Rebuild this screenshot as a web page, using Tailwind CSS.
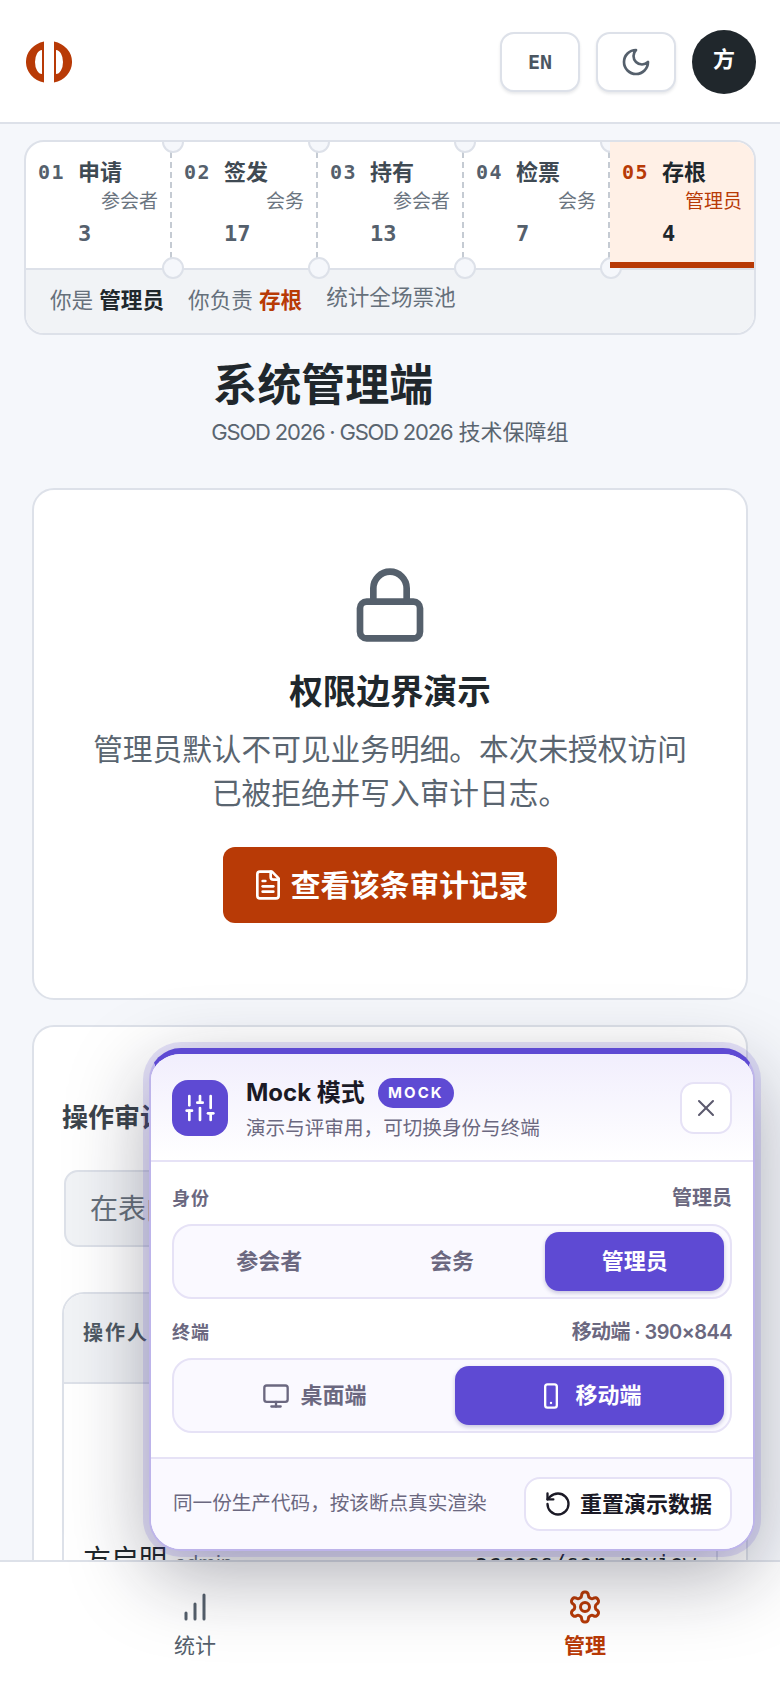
<!DOCTYPE html>
<html lang="zh-CN">

<head>
    <meta charset="UTF-8">
    <meta name="viewport" content="width=device-width, initial-scale=1.0">
    <title>系统管理端</title>
    <script src="https://cdn.jsdelivr.net/npm/@tailwindcss/browser@4"></script>
</head>

<body class="relative w-[780px] h-[1688px] overflow-hidden bg-[#f5f7fb] text-[#20272c] font-['Inter','Noto_Sans_CJK_SC',sans-serif]">
    <!-- top bar -->
    <header class="h-[124px] bg-white border-b-2 border-[#dde1e9] flex items-center justify-between pl-[26px] pr-6 pt-[1px]">
        <svg class="w-[46px] h-[42px]" viewBox="26 40 46 42" fill="#b83a06">
            <path fill-rule="evenodd" d="M44 40.5A23 21 0 0 0 44 81.5ZM42 49A7 12 0 0 0 42 73Z" />
            <path fill-rule="evenodd" d="M54 40.5A23 21 0 0 1 54 81.5ZM56 49A7 12 0 0 1 56 73Z" />
        </svg>
        <div class="flex items-center gap-4">
            <button class="w-20 h-[60px] rounded-[14px] border-2 border-[#dde1e9] bg-white shadow-[0_2px_3px_rgba(30,40,60,0.1)] font-['DejaVu_Sans_Mono',monospace] font-bold text-[20px] text-[#4b5661]">EN</button>
            <button class="w-20 h-[60px] rounded-[14px] border-2 border-[#dde1e9] bg-white shadow-[0_2px_3px_rgba(30,40,60,0.1)] flex items-center justify-center text-[#55606c]">
                <svg class="w-8 h-8" viewBox="0 0 24 24" fill="none" stroke="currentColor" stroke-width="2" stroke-linecap="round" stroke-linejoin="round"><path d="M12 3a6 6 0 0 0 9 9 9 9 0 1 1-9-9Z" /></svg>
            </button>
            <div class="w-16 h-16 rounded-full bg-[#20272c] text-white font-semibold text-[22px] flex items-center justify-center pb-1">方</div>
        </div>
    </header>

    <main class="px-6 pt-4">
        <!-- ticket stepper -->
        <section class="relative overflow-hidden rounded-[20px] border-2 border-[#dde1e9] bg-white">
            <div class="flex h-[126px]">
                <div class="relative flex-1 border-r-2 border-dashed border-[#c5cbd3] pl-[12px] pr-[12px] pt-[15px]">
                    <span class="absolute -top-[11px] -right-[14px] z-10 w-[22px] h-[22px] rounded-full border-2 border-[#dde1e9] bg-[#f5f7fb]"></span>
                    <span class="absolute -bottom-[11px] -right-[14px] z-10 w-[22px] h-[22px] rounded-full border-2 border-[#dde1e9] bg-[#f5f7fb]"></span>
                    <div class="flex h-[30px] items-center gap-[13px]"><span class="font-['DejaVu_Sans_Mono',monospace] font-bold text-[20px] tracking-[1.5px] text-[#55606c]">01</span><span class="text-[22px] font-semibold text-[#3f4a53]">申请</span></div>
                    <div class="h-[26px] mt-[2px] leading-[26px] text-right text-[19px] text-[#6b7580]">参会者</div>
                    <div class="h-[30px] mt-[4px] leading-[30px] pl-[40px] font-['DejaVu_Sans_Mono',monospace] font-bold text-[22px] text-[#55606c]">3</div>
                </div>
                <div class="relative flex-1 border-r-2 border-dashed border-[#c5cbd3] pl-[12px] pr-[12px] pt-[15px]">
                    <span class="absolute -top-[11px] -right-[14px] z-10 w-[22px] h-[22px] rounded-full border-2 border-[#dde1e9] bg-[#f5f7fb]"></span>
                    <span class="absolute -bottom-[11px] -right-[14px] z-10 w-[22px] h-[22px] rounded-full border-2 border-[#dde1e9] bg-[#f5f7fb]"></span>
                    <div class="flex h-[30px] items-center gap-[13px]"><span class="font-['DejaVu_Sans_Mono',monospace] font-bold text-[20px] tracking-[1.5px] text-[#55606c]">02</span><span class="text-[22px] font-semibold text-[#3f4a53]">签发</span></div>
                    <div class="h-[26px] mt-[2px] leading-[26px] text-right text-[19px] text-[#6b7580]">会务</div>
                    <div class="h-[30px] mt-[4px] leading-[30px] pl-[40px] font-['DejaVu_Sans_Mono',monospace] font-bold text-[22px] text-[#55606c]">17</div>
                </div>
                <div class="relative flex-1 border-r-2 border-dashed border-[#c5cbd3] pl-[12px] pr-[12px] pt-[15px]">
                    <span class="absolute -top-[11px] -right-[14px] z-10 w-[22px] h-[22px] rounded-full border-2 border-[#dde1e9] bg-[#f5f7fb]"></span>
                    <span class="absolute -bottom-[11px] -right-[14px] z-10 w-[22px] h-[22px] rounded-full border-2 border-[#dde1e9] bg-[#f5f7fb]"></span>
                    <div class="flex h-[30px] items-center gap-[13px]"><span class="font-['DejaVu_Sans_Mono',monospace] font-bold text-[20px] tracking-[1.5px] text-[#55606c]">03</span><span class="text-[22px] font-semibold text-[#3f4a53]">持有</span></div>
                    <div class="h-[26px] mt-[2px] leading-[26px] text-right text-[19px] text-[#6b7580]">参会者</div>
                    <div class="h-[30px] mt-[4px] leading-[30px] pl-[40px] font-['DejaVu_Sans_Mono',monospace] font-bold text-[22px] text-[#55606c]">13</div>
                </div>
                <div class="relative flex-1 border-r-2 border-dashed border-[#c5cbd3] pl-[12px] pr-[12px] pt-[15px]">
                    <span class="absolute -top-[11px] -right-[14px] z-10 w-[22px] h-[22px] rounded-full border-2 border-[#dde1e9] bg-[#f5f7fb]"></span>
                    <span class="absolute -bottom-[11px] -right-[14px] z-10 w-[22px] h-[22px] rounded-full border-2 border-[#dde1e9] bg-[#f5f7fb]"></span>
                    <div class="flex h-[30px] items-center gap-[13px]"><span class="font-['DejaVu_Sans_Mono',monospace] font-bold text-[20px] tracking-[1.5px] text-[#55606c]">04</span><span class="text-[22px] font-semibold text-[#3f4a53]">检票</span></div>
                    <div class="h-[26px] mt-[2px] leading-[26px] text-right text-[19px] text-[#6b7580]">会务</div>
                    <div class="h-[30px] mt-[4px] leading-[30px] pl-[40px] font-['DejaVu_Sans_Mono',monospace] font-bold text-[22px] text-[#55606c]">7</div>
                </div>
                <div class="relative z-20 flex-1 bg-[#fff0e6] border-b-[6px] border-[#b83a06] pl-[12px] pr-[12px] pt-[15px]">
                    <div class="flex h-[30px] items-center gap-[13px]"><span class="font-['DejaVu_Sans_Mono',monospace] font-bold text-[20px] tracking-[1.5px] text-[#b83a06]">05</span><span class="text-[22px] font-semibold text-[#20272c]">存根</span></div>
                    <div class="h-[26px] mt-[2px] leading-[26px] text-right text-[19px] text-[#b83a06]">管理员</div>
                    <div class="h-[30px] mt-[4px] leading-[30px] pl-[40px] font-['DejaVu_Sans_Mono',monospace] font-bold text-[22px] text-[#20272c]">4</div>
                </div>
            </div>
            <div class="h-[65px] border-t-2 border-[#dde1e9] bg-[#f1f3f6] flex items-start gap-6 pl-6 pt-[14px] text-[21.6px] text-[#66707b]">
                <span class="leading-[32px]">你是 <b class="font-semibold text-[#20272c]">管理员</b></span>
                <span class="leading-[32px]">你负责 <b class="font-semibold text-[#b83a06]">存根</b></span>
                <span class="leading-[26px]">统计全场票池</span>
            </div>
        </section>

        <!-- page title -->
        <div class="w-fit mx-auto mt-[22px]">
            <h1 class="text-[44px] leading-[56px] font-bold pl-[2px]">系统管理端</h1>
            <p class="mt-[3px] text-[22px] leading-[32px] text-[#5a6570]"><span class="tracking-[-1.2px]">GSOD 2026 · GSOD 2026</span> 技术保障组</p>
        </div>

        <!-- permission boundary -->
        <section class="mx-2 mt-10 rounded-[22px] border-2 border-[#dde1e9] bg-white pt-[75px] pb-[75px] flex flex-col items-center">
            <svg class="w-20 h-20 text-[#55606c]" viewBox="0 0 24 24" fill="none" stroke="currentColor" stroke-width="2" stroke-linecap="round" stroke-linejoin="round">
                <rect x="3" y="11" width="18" height="11" rx="2" />
                <path d="M7 11V7a5 5 0 0 1 10 0v4" />
            </svg>
            <h2 class="mt-6 text-[33.6px] leading-[46px] font-semibold">权限边界演示</h2>
            <p class="mt-3 text-[29.7px] leading-[44px] text-[#5a6570] text-center w-[600px]">管理员默认不可见业务明细。本次未授权访问已被拒绝并写入审计日志。</p>
            <button class="mt-8 h-[76px] w-[334px] rounded-[12px] bg-[#b83a06] text-white text-[29.7px] font-semibold flex items-center justify-center gap-[7px]">
                <svg class="w-8 h-8" viewBox="0 0 24 24" fill="none" stroke="currentColor" stroke-width="2" stroke-linecap="round" stroke-linejoin="round">
                    <path d="M15 2H6a2 2 0 0 0-2 2v16a2 2 0 0 0 2 2h12a2 2 0 0 0 2-2V7Z" />
                    <path d="M14 2v4a2 2 0 0 0 2 2h4" />
                    <path d="M16 13H8" /><path d="M16 17H8" /><path d="M10 9H8" />
                </svg>
                查看该条审计记录
            </button>
        </section>

        <!-- audit log, mostly behind the panel -->
        <section class="mx-2 mt-[25px] h-[700px] rounded-t-[22px] border-2 border-[#dde1e9] bg-white px-[28px] pt-[73px]">
            <h2 class="text-[26px] leading-9 font-bold text-[#3c444c]">操作审计日志</h2>
            <div class="mt-[34px] mx-[2px] h-[77px] rounded-[14px] border-2 border-[#dde1e9] bg-[#f1f3f6] pl-[24px] flex items-center text-[28px] text-[#66707b]">在表内搜索</div>
            <div class="mt-[45px] h-[400px] rounded-t-[22px] border-2 border-[#dde1e9]">
                <div class="h-[90px] rounded-t-[20px] border-b-2 border-[#dde1e9] bg-[#f1f3f6] pl-[19px] pt-[25px] text-[20px] leading-7 font-bold tracking-[2px] text-[#4f5a64]">操作人</div>
                <div class="mt-[156px] pl-[19px] flex items-baseline justify-between pr-[20px]">
                    <span class="text-[28px] leading-10 text-[#20272c]">方启明 <small class="text-[20px] text-[#6b7580]">admin</small></span>
                    <span class="font-['DejaVu_Sans_Mono',monospace] text-[21.6px] text-[#20272c]">access/ser_review</span>
                </div>
            </div>
        </section>
    </main>

    <!-- bottom nav -->
    <nav class="absolute left-0 right-0 bottom-0 h-[128px] border-t-2 border-[#dde1e9] bg-white grid grid-cols-2 z-30">
        <a class="flex flex-col items-center pt-[27px] text-[#55606c]">
            <svg class="w-9 h-9" viewBox="0 0 24 24" fill="none" stroke="currentColor" stroke-width="2" stroke-linecap="round" stroke-linejoin="round">
                <path d="M12 20V10" /><path d="M18 20V4" /><path d="M6 20v-4" />
            </svg>
            <span class="mt-[6px] text-[21px] leading-[30px]">统计</span>
        </a>
        <a class="flex flex-col items-center pt-[27px] text-[#b83a06]">
            <svg class="w-9 h-9" viewBox="0 0 24 24" fill="none" stroke="currentColor" stroke-width="2" stroke-linecap="round" stroke-linejoin="round">
                <path d="M12.22 2h-.44a2 2 0 0 0-2 2v.18a2 2 0 0 1-1 1.73l-.43.25a2 2 0 0 1-2 0l-.15-.08a2 2 0 0 0-2.73.73l-.22.38a2 2 0 0 0 .73 2.73l.15.1a2 2 0 0 1 1 1.72v.51a2 2 0 0 1-1 1.74l-.15.09a2 2 0 0 0-.73 2.73l.22.38a2 2 0 0 0 2.73.73l.15-.08a2 2 0 0 1 2 0l.43.25a2 2 0 0 1 1 1.73V20a2 2 0 0 0 2 2h.44a2 2 0 0 0 2-2v-.18a2 2 0 0 1 1-1.73l.43-.25a2 2 0 0 1 2 0l.15.08a2 2 0 0 0 2.73-.73l.22-.39a2 2 0 0 0-.73-2.73l-.15-.08a2 2 0 0 1-1-1.74v-.5a2 2 0 0 1 1-1.74l.15-.09a2 2 0 0 0 .73-2.73l-.22-.38a2 2 0 0 0-2.73-.73l-.15.08a2 2 0 0 1-2 0l-.43-.25a2 2 0 0 1-1-1.73V4a2 2 0 0 0-2-2z" />
                <circle cx="12" cy="12" r="3" />
            </svg>
            <span class="mt-[6px] text-[21px] leading-[30px] font-semibold">管理</span>
        </a>
    </nav>

    <!-- mock mode panel -->
    <aside class="absolute z-40 left-[149px] top-[1048px] w-[606px] h-[503px] rounded-[32px] border-2 border-t-[6px] border-[#bdb4ea] border-t-[#5e4ad3] bg-white flex flex-col overflow-hidden shadow-[0_0_0_6px_rgba(94,74,211,0.16),0_24px_80px_rgba(20,20,40,0.35)]">
        <div class="h-[108px] shrink-0 border-b-2 border-[#e6e2f6] bg-gradient-to-b from-[#f1eefd] to-white pl-[21px] pr-[21px] pt-[26px] flex items-start">
            <div class="w-14 h-14 rounded-[16px] bg-[#5e4ad3] text-white flex items-center justify-center">
                <svg class="w-8 h-8" viewBox="0 0 24 24" fill="none" stroke="currentColor" stroke-width="2" stroke-linecap="round" stroke-linejoin="round">
                    <line x1="4" y1="21" x2="4" y2="14" /><line x1="4" y1="10" x2="4" y2="3" />
                    <line x1="12" y1="21" x2="12" y2="12" /><line x1="12" y1="8" x2="12" y2="3" />
                    <line x1="20" y1="21" x2="20" y2="16" /><line x1="20" y1="12" x2="20" y2="3" />
                    <line x1="2" y1="14" x2="6" y2="14" /><line x1="10" y1="8" x2="14" y2="8" /><line x1="18" y1="16" x2="22" y2="16" />
                </svg>
            </div>
            <div class="ml-[18px] flex-1">
                <div class="flex items-center gap-[13px] h-[30px] -mt-[2px]">
                    <span class="text-[24px] font-bold text-[#1b1a26]">Mock 模式</span>
                    <span class="w-[76px] h-[30px] rounded-full bg-[#5e4ad3] text-white text-[15px] font-bold tracking-[2px] flex items-center justify-center">MOCK</span>
                </div>
                <p class="mt-[5px] text-[19.6px] leading-[30px] text-[#6b6880]">演示与评审用，可切换身份与终端</p>
            </div>
            <button class="w-[52px] h-[52px] mt-[2px] rounded-[14px] border-2 border-[#e6e2f6] bg-white flex items-center justify-center text-[#5c5a6e]">
                <svg class="w-7 h-7" viewBox="0 0 24 24" fill="none" stroke="currentColor" stroke-width="1.75" stroke-linecap="round" stroke-linejoin="round"><path d="M18 6 6 18" /><path d="m6 6 12 12" /></svg>
            </button>
        </div>

        <div class="h-[295px] shrink-0 px-[21px] pt-[20px]">
            <div class="flex items-center justify-between h-[32px] text-[#6b6880]">
                <span class="text-[18px] font-semibold tracking-[1px]">身份</span>
                <span class="text-[20px] font-semibold">管理员</span>
            </div>
            <div class="mt-[10px] h-[75px] rounded-[20px] border-2 border-[#e6e2f6] bg-[#faf9ff] p-[6px] grid grid-cols-3 gap-1 text-[22px] font-semibold text-[#6b6880]">
                <button>参会者</button>
                <button>会务</button>
                <button class="rounded-[14px] bg-[#5e4ad3] text-white shadow-[0_2px_4px_rgba(40,30,120,0.25)]">管理员</button>
            </div>
            <div class="mt-[17px] flex items-center justify-between h-[32px] text-[#6b6880]">
                <span class="text-[18px] font-semibold tracking-[1px]">终端</span>
                <span class="text-[20px] font-semibold tracking-[-0.6px]">移动端 · 390×844</span>
            </div>
            <div class="mt-[10px] h-[75px] rounded-[20px] border-2 border-[#e6e2f6] bg-[#faf9ff] p-[6px] grid grid-cols-2 gap-[6px] text-[22px] font-semibold text-[#6b6880]">
                <button class="flex items-center justify-center gap-[10px]">
                    <svg class="w-7 h-7" viewBox="0 0 24 24" fill="none" stroke="currentColor" stroke-width="2" stroke-linecap="round" stroke-linejoin="round">
                        <rect x="2" y="3" width="20" height="14" rx="2" /><line x1="8" y1="21" x2="16" y2="21" /><line x1="12" y1="17" x2="12" y2="21" />
                    </svg>
                    桌面端
                </button>
                <button class="rounded-[14px] bg-[#5e4ad3] text-white shadow-[0_2px_4px_rgba(40,30,120,0.25)] flex items-center justify-center gap-[10px]">
                    <svg class="w-7 h-7" viewBox="0 0 24 24" fill="none" stroke="currentColor" stroke-width="2" stroke-linecap="round" stroke-linejoin="round">
                        <rect x="7" y="2" width="10" height="20" rx="2" /><path d="M12 18h.01" />
                    </svg>
                    移动端
                </button>
            </div>
        </div>

        <div class="flex-1 border-t-2 border-[#e6e2f6] bg-[#faf9ff] pl-[22px] pr-[21px] flex items-center justify-between">
            <span class="text-[19.6px] text-[#6b6880]">同一份生产代码，按该断点真实渲染</span>
            <button class="w-[208px] h-[54px] rounded-[16px] border-2 border-[#e6e2f6] bg-white text-[22px] font-semibold text-[#1b1a26] flex items-center justify-center gap-[8px]">
                <svg class="w-7 h-7" viewBox="0 0 24 24" fill="none" stroke="currentColor" stroke-width="2" stroke-linecap="round" stroke-linejoin="round">
                    <path d="M3 12a9 9 0 1 0 9-9 9.75 9.75 0 0 0-6.74 2.74L3 8" /><path d="M3 3v5h5" />
                </svg>
                重置演示数据
            </button>
        </div>
    </aside>
</body>

</html>
